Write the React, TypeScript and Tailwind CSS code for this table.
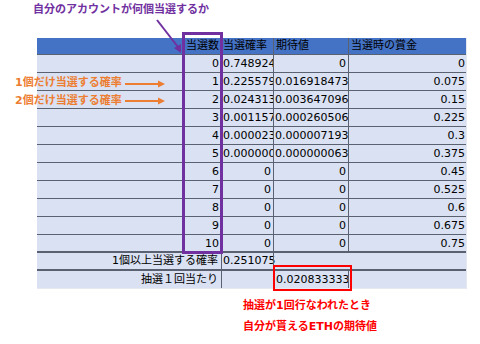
const rows = [
  { n: '0', p: '0.748924', e: '0', prize: '0' },
  { n: '1', p: '0.225579', e: '0.016918473', prize: '0.075' },
  { n: '2', p: '0.024313', e: '0.003647096', prize: '0.15' },
  { n: '3', p: '0.001157', e: '0.000260506', prize: '0.225' },
  { n: '4', p: '0.000023', e: '0.000007193', prize: '0.3' },
  { n: '5', p: '0.000000', e: '0.000000063', prize: '0.375' },
  { n: '6', p: '0', e: '0', prize: '0.45' },
  { n: '7', p: '0', e: '0', prize: '0.525' },
  { n: '8', p: '0', e: '0', prize: '0.6' },
  { n: '9', p: '0', e: '0', prize: '0.675' },
  { n: '10', p: '0', e: '0', prize: '0.75' },
];

const line = 'border-[#5a6272]';

function Arrow({ top }: { top: number }) {
  return (
    <svg
      className="absolute left-[124px]"
      style={{ top }}
      width="42"
      height="8"
      viewBox="0 0 42 8"
    >
      <line x1="1" y1="4" x2="35" y2="4" stroke="#ED7D31" strokeWidth="2" />
      <polygon points="34,0.5 41,4 34,7.5" fill="#ED7D31" />
    </svg>
  );
}

export default function App() {
  return (
    <div className="relative w-[480px] h-[344px] bg-white overflow-hidden text-black font-['DejaVu_Sans','Noto_Sans_CJK_JP',sans-serif] text-[11px]">
      <div className="h-[38px] pl-[33px] pt-[3px] font-bold text-[#7030A0] leading-[14px]">
        自分のアカウントが何個当選するか
      </div>

      <div className="ml-[37px] w-[430px] bg-[#D9E1F2] border-r border-[#e4e8ef]">
        <div className={`grid grid-cols-[146px_38px_52px_75px_119px] h-[17px] bg-[#4472C4] border-b ${line} leading-[16px]`}>
          <div />
          <div className="pl-[3px] whitespace-nowrap">当選数</div>
          <div className={`border-l ${line} pl-[1px] whitespace-nowrap overflow-hidden`}>当選確率</div>
          <div className={`border-l ${line} pl-[2px]`}>期待値</div>
          <div className={`border-l ${line} pl-[2px]`}>当選時の賞金</div>
        </div>
        {rows.map((r, i) => (
          <div
            key={r.n}
            className={`grid grid-cols-[146px_38px_52px_75px_119px] h-[18px] ${i === rows.length - 1 ? 'border-b-2' : 'border-b'} ${line} leading-[17px]`}
          >
            <div />
            <div className="text-right pr-[2px]">{r.n}</div>
            <div className={`border-l ${line} overflow-hidden whitespace-nowrap ${r.p === '0' ? 'text-right pr-[2px]' : 'pl-[1px]'}`}>
              {r.p}
            </div>
            <div className={`border-l ${line} overflow-hidden whitespace-nowrap ${r.e === '0' ? 'text-right pr-[2px]' : 'pl-[1px]'}`}>
              {r.e}
            </div>
            <div className={`border-l ${line} text-right pr-[2px]`}>{r.prize}</div>
          </div>
        ))}
        <div className={`grid grid-cols-[184px_52px_75px_119px] h-[18px] border-b-2 ${line} leading-[16px]`}>
          <div className="text-right pr-[3px] whitespace-nowrap">1個以上当選する確率</div>
          <div className={`border-l ${line} pl-[1px] whitespace-nowrap`}>0.251075</div>
          <div className={`border-l ${line}`} />
          <div />
        </div>
        <div className="grid grid-cols-[184px_52px_75px_119px] h-[18px] border-b border-[#e6e9ef] leading-[17px]">
          <div className="text-right pr-[3px] whitespace-nowrap">抽選１回当たり</div>
          <div className={`border-l ${line}`} />
          <div className="pl-[3px] whitespace-nowrap">0.020833333</div>
          <div className={`border-l ${line}`} />
        </div>
      </div>

      <div className="ml-[243px] mt-[10px] flex flex-col gap-[7px] font-bold text-[#FF0000] leading-[14px]">
        <span>抽選が1回行なわれたとき</span>
        <span>自分が貰えるETHの期待値</span>
      </div>

      {/* annotations over the sheet */}
      <svg className="absolute left-[150px] top-[14px]" width="40" height="42" viewBox="0 0 40 42">
        <line x1="7" y1="6" x2="28" y2="33" stroke="#7030A0" strokeWidth="2" />
        <polygon points="24,34 31,39 31,30" fill="#7030A0" />
      </svg>
      <div className="absolute left-[182px] top-[32px] w-[41px] h-[222px] border-[3px] border-[#7030A0]" />

      <div className="absolute left-[15px] top-[76px] font-bold text-[#ED7D31] leading-[14px]">1個だけ当選する確率</div>
      <Arrow top={80} />
      <div className="absolute left-[15px] top-[94px] font-bold text-[#ED7D31] leading-[14px]">2個だけ当選する確率</div>
      <Arrow top={97} />

      <div className="absolute left-[273px] top-[265px] w-[79px] h-[26px] border-2 border-[#FF0000]" />
    </div>
  );
}
